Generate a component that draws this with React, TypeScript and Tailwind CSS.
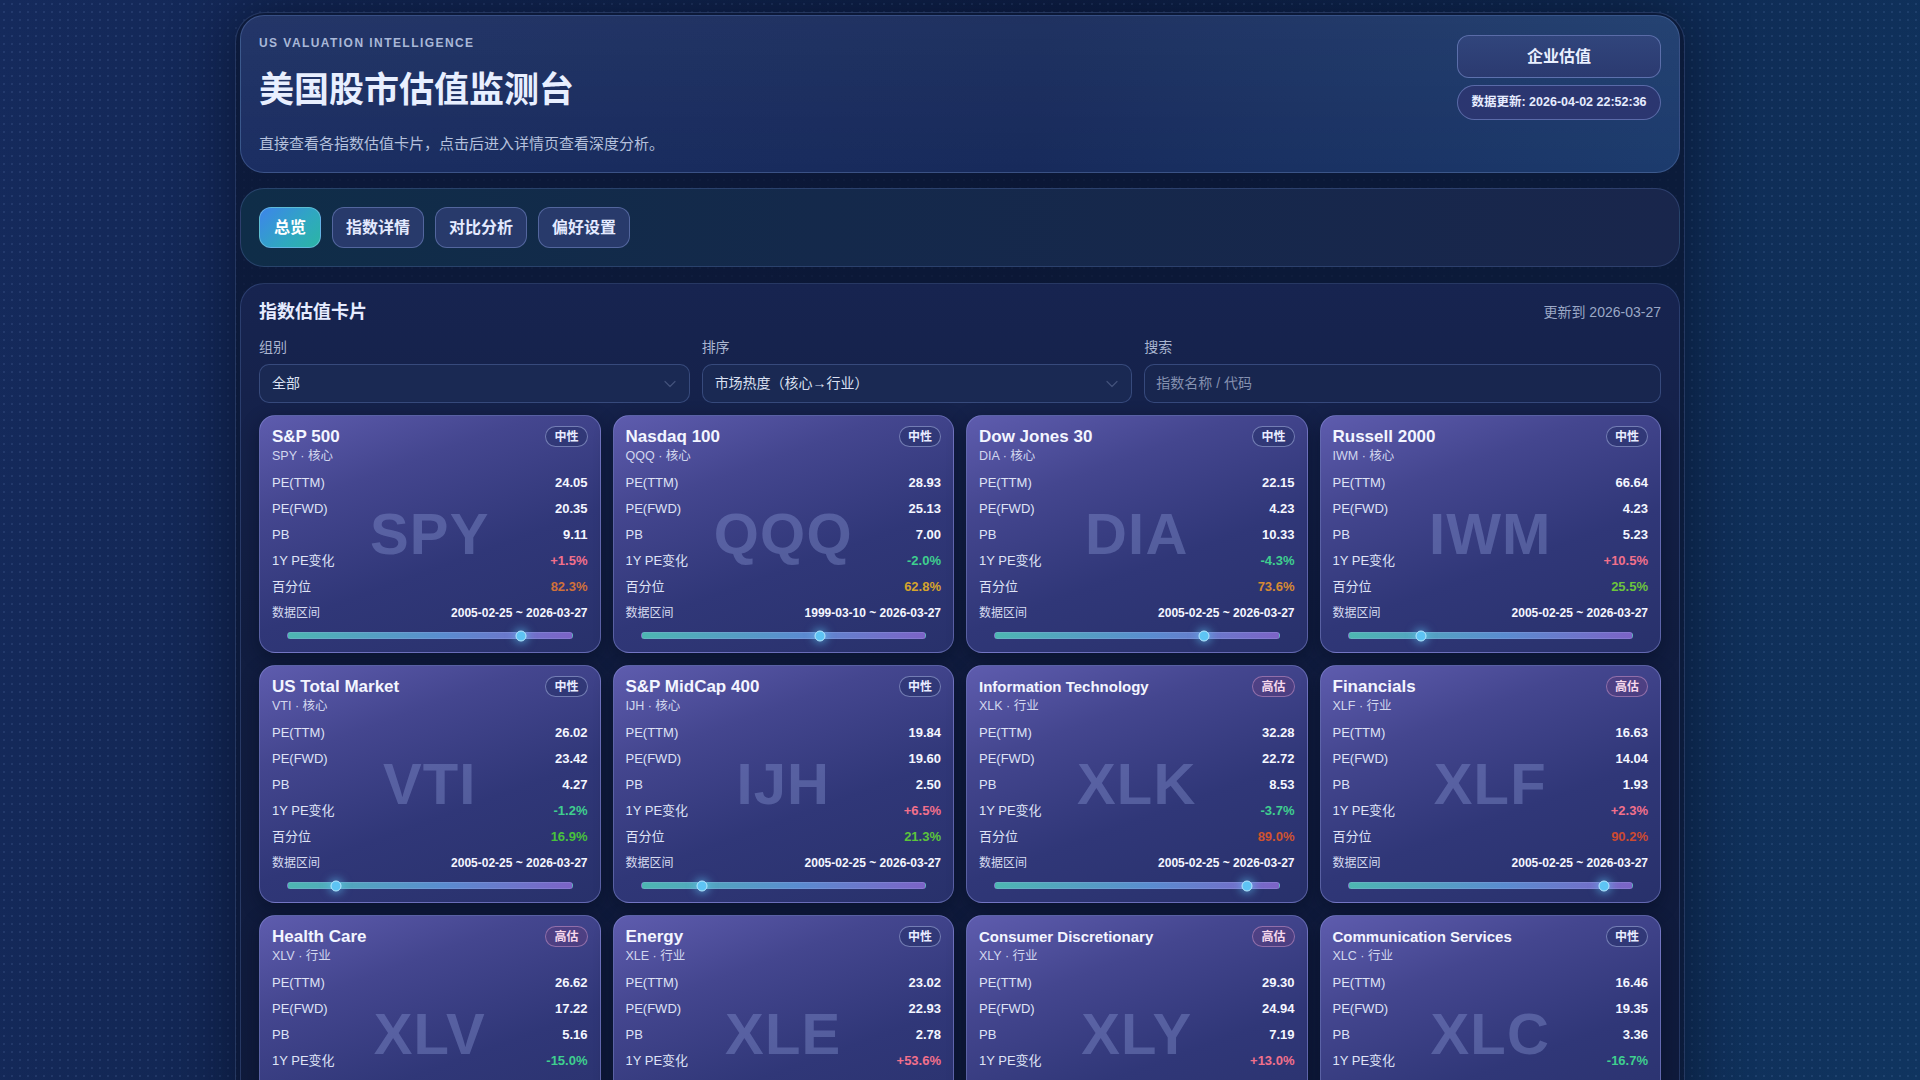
import React from "react";

type Item = {
  name: string;
  code: string;
  group: string;
  badge: "中性" | "高估";
  ttm: string;
  fwd: string;
  pb: string;
  chg: string;
  pct: number;
  pctColor: string;
  range: string;
};

const R1 = "2005-02-25 ~ 2026-03-27";

const items: Item[] = [
  { name: "S&P 500", code: "SPY", group: "核心", badge: "中性", ttm: "24.05", fwd: "20.35", pb: "9.11", chg: "+1.5%", pct: 82.3, pctColor: "#d0713a", range: R1 },
  { name: "Nasdaq 100", code: "QQQ", group: "核心", badge: "中性", ttm: "28.93", fwd: "25.13", pb: "7.00", chg: "-2.0%", pct: 62.8, pctColor: "#d5a42c", range: "1999-03-10 ~ 2026-03-27" },
  { name: "Dow Jones 30", code: "DIA", group: "核心", badge: "中性", ttm: "22.15", fwd: "4.23", pb: "10.33", chg: "-4.3%", pct: 73.6, pctColor: "#d68a33", range: R1 },
  { name: "Russell 2000", code: "IWM", group: "核心", badge: "中性", ttm: "66.64", fwd: "4.23", pb: "5.23", chg: "+10.5%", pct: 25.5, pctColor: "#6cc43c", range: R1 },
  { name: "US Total Market", code: "VTI", group: "核心", badge: "中性", ttm: "26.02", fwd: "23.42", pb: "4.27", chg: "-1.2%", pct: 16.9, pctColor: "#48c23c", range: R1 },
  { name: "S&P MidCap 400", code: "IJH", group: "核心", badge: "中性", ttm: "19.84", fwd: "19.60", pb: "2.50", chg: "+6.5%", pct: 21.3, pctColor: "#5cc43b", range: R1 },
  { name: "Information Technology", code: "XLK", group: "行业", badge: "高估", ttm: "32.28", fwd: "22.72", pb: "8.53", chg: "-3.7%", pct: 89.0, pctColor: "#cf5330", range: R1 },
  { name: "Financials", code: "XLF", group: "行业", badge: "高估", ttm: "16.63", fwd: "14.04", pb: "1.93", chg: "+2.3%", pct: 90.2, pctColor: "#cd4a30", range: R1 },
  { name: "Health Care", code: "XLV", group: "行业", badge: "高估", ttm: "26.62", fwd: "17.22", pb: "5.16", chg: "-15.0%", pct: 86.4, pctColor: "#cf5d31", range: R1 },
  { name: "Energy", code: "XLE", group: "行业", badge: "中性", ttm: "23.02", fwd: "22.93", pb: "2.78", chg: "+53.6%", pct: 58.7, pctColor: "#d4a82c", range: R1 },
  { name: "Consumer Discretionary", code: "XLY", group: "行业", badge: "高估", ttm: "29.30", fwd: "24.94", pb: "7.19", chg: "+13.0%", pct: 87.5, pctColor: "#cf5830", range: R1 },
  { name: "Communication Services", code: "XLC", group: "行业", badge: "中性", ttm: "16.46", fwd: "19.35", pb: "3.36", chg: "-16.7%", pct: 47.2, pctColor: "#b8b833", range: R1 },
];

function Badge({ kind }: { kind: "中性" | "高估" }) {
  if (kind === "高估") {
    return (
      <span className="flex h-[21px] shrink-0 items-center rounded-full border border-[#c995c8]/55 bg-[#6a3c78]/35 px-[8px] text-[12px] font-bold text-[#f6d7ec]">
        高估
      </span>
    );
  }
  return (
    <span className="flex h-[21px] shrink-0 items-center rounded-full border border-[#aab6e4]/55 bg-[#1e2a60]/40 px-[8px] text-[12px] font-bold text-[#e8ecff]">
      中性
    </span>
  );
}

function Card({ it }: { it: Item }) {
  const long = it.name.length > 18;
  const pos = it.chg.startsWith("+");
  const rows: { label: string; value: string; color?: string }[] = [
    { label: "PE(TTM)", value: it.ttm },
    { label: "PE(FWD)", value: it.fwd },
    { label: "PB", value: it.pb },
    { label: "1Y PE变化", value: it.chg, color: pos ? "#f2708b" : "#3fcf8f" },
    { label: "百分位", value: `${it.pct.toFixed(1)}%`, color: it.pctColor },
  ];
  return (
    <div className="relative h-[238px] overflow-hidden rounded-[16px] border border-[#9298e2]/45 bg-[linear-gradient(160deg,#5e5cae_0%,#44468f_28%,#303778_60%,#28316b_100%)] pl-[12px] pr-[12px] pt-[10px] shadow-[0_6px_18px_rgba(5,10,30,0.45)]">
      <div className="pointer-events-none absolute inset-0 flex select-none items-center justify-center text-[58px] font-bold leading-none tracking-[0.02em] text-[#8797d2]/40">
        {it.code}
      </div>
      <div className="relative">
        <div className="flex h-[21px] items-center justify-between">
          <div
            className={
              long
                ? "text-[15px] font-bold leading-[20px] text-[#f3f5ff]"
                : "text-[17px] font-bold leading-[20px] text-[#f3f5ff]"
            }
          >
            {it.name}
          </div>
          <Badge kind={it.badge} />
        </div>
        <div className="text-[12.5px] leading-[18px] text-[#d2d7ee]">
          {it.code} · {it.group}
        </div>
        <div className="mt-[5px]">
          {rows.map((r) => (
            <div key={r.label} className="flex h-[26px] items-center justify-between text-[13px]">
              <span className="text-[#dfe3f6]">{r.label}</span>
              <span className="font-bold text-[#f4f6ff]" style={r.color ? { color: r.color } : undefined}>
                {r.value}
              </span>
            </div>
          ))}
          <div className="flex h-[26px] items-center justify-between text-[12px]">
            <span className="text-[#d6dbf0]">数据区间</span>
            <span className="font-bold text-[#f4f6ff]">{it.range}</span>
          </div>
        </div>
        <div className="relative mx-[15px] mt-[6px] h-[7px] rounded-full border border-[#a9b4ec]/25 bg-[linear-gradient(90deg,#4db7b2_0%,#5a8cd0_55%,#7c63c6_100%)]">
          <div
            className="absolute top-1/2 h-[11px] w-[11px] -translate-x-1/2 -translate-y-1/2 rounded-full border border-[#b6e8ff] bg-[#5ec4f4] shadow-[0_0_8px_2px_rgba(94,196,244,0.55)]"
            style={{ left: `${it.pct}%` }}
          />
        </div>
      </div>
    </div>
  );
}

function Chevron() {
  return (
    <svg width="12" height="8" viewBox="0 0 12 8" fill="none" className="opacity-35">
      <path d="M1 1.5 L6 6.5 L11 1.5" stroke="#8d9cc4" strokeWidth="1.2" strokeLinecap="round" strokeLinejoin="round" />
    </svg>
  );
}

export default function App() {
  return (
    <div className="relative min-h-screen w-full overflow-hidden bg-[linear-gradient(100deg,#152a5c_0%,#11254f_30%,#0e1f45_50%,#0f2c55_80%,#103560_100%)] font-['Liberation_Sans','Noto_Sans_CJK_SC',sans-serif]">
      <div className="pointer-events-none absolute inset-0 bg-[radial-gradient(rgba(160,190,255,0.10)_1px,transparent_1.3px)] bg-[length:8px_8px]" />
      <div className="relative mx-auto mt-[12px] w-[1450px] rounded-t-[30px] border border-b-0 border-[#4a6398]/40 bg-[#0b1631]/75 px-[4px] pt-[2px] pb-[40px] shadow-[0_0_60px_rgba(3,8,25,0.55)]">
        {/* Header */}
        <div className="flex h-[158px] justify-between rounded-[24px] border border-[#5c77b0]/45 bg-[linear-gradient(180deg,rgba(255,255,255,0.04),rgba(255,255,255,0)),linear-gradient(95deg,#1b2e62_0%,#172a5b_55%,#1c3b6d_100%)] px-[18px] pt-[19px]">
          <div>
            <div className="text-[12px] font-bold leading-[16px] tracking-[0.12em] text-[#a9b8d8]">
              US VALUATION INTELLIGENCE
            </div>
            <div className="mt-[16px] text-[35px] font-bold leading-[46px] text-[#e8efff]">美国股市估值监测台</div>
            <div className="mt-[20px] text-[15px] leading-[22px] text-[#b5c1dd]">
              直接查看各指数估值卡片，点击后进入详情页查看深度分析。
            </div>
          </div>
          <div className="flex w-[204px] flex-col gap-[7px]">
            <div className="flex h-[43px] items-center justify-center rounded-[12px] border border-[#8a9ee0]/50 bg-[linear-gradient(180deg,#31457c,#2b3a70)] text-[16px] font-bold text-[#eaf0ff]">
              企业估值
            </div>
            <div className="flex h-[35px] items-center justify-center rounded-full border border-[#8a9ee0]/50 bg-[#2b3670] text-[12.5px] font-bold text-[#e6ecff]">
              数据更新: 2026-04-02 22:52:36
            </div>
          </div>
        </div>

        {/* Nav */}
        <div className="mt-[15px] flex h-[79px] items-center gap-[11px] rounded-[24px] border border-[#4d67a0]/40 bg-[linear-gradient(90deg,#0f2d48_0%,#14294b_40%,#19264c_100%)] px-[18px]">
          <div className="flex h-[41px] items-center rounded-[12px] border border-[#7fc8ea]/60 bg-[linear-gradient(135deg,#3d85ea_0%,#2fa8c0_60%,#2bb5a4_100%)] px-[14px] text-[16px] font-bold text-white">
            总览
          </div>
          {["指数详情", "对比分析", "偏好设置"].map((t) => (
            <div
              key={t}
              className="flex h-[41px] items-center rounded-[12px] border border-[#7d92d2]/50 bg-[#283a6b] px-[13px] text-[16px] font-bold text-[#e4eaff]"
            >
              {t}
            </div>
          ))}
        </div>

        {/* Cards panel */}
        <div className="mt-[16px] rounded-t-[24px] border border-b-0 border-[#4d67a0]/40 bg-[linear-gradient(180deg,#172450_0%,#111d40_40%,#0f1a3b_100%)] px-[18px] pt-[15px] pb-[20px]">
          <div className="flex h-[26px] items-center justify-between">
            <div className="text-[18px] font-bold text-[#e6ecff]">指数估值卡片</div>
            <div className="text-[14px] text-[#9ba8c6]">更新到 2026-03-27</div>
          </div>
          <div className="mt-[12px] grid grid-cols-[1fr_1fr_1.2fr] gap-x-3">
            <div>
              <div className="text-[14px] leading-[20px] text-[#aab5d0]">组别</div>
              <div className="mt-[7px] flex h-[39px] items-center justify-between rounded-[10px] border border-[#3f5387]/80 bg-[#1a2953] pl-[12px] pr-[13px] text-[14px] text-[#dbe1f2]">
                <span>全部</span>
                <Chevron />
              </div>
            </div>
            <div>
              <div className="text-[14px] leading-[20px] text-[#aab5d0]">排序</div>
              <div className="mt-[7px] flex h-[39px] items-center justify-between rounded-[10px] border border-[#3f5387]/80 bg-[#1a2953] pl-[12px] pr-[13px] text-[14px] text-[#dbe1f2]">
                <span>市场热度（核心→行业）</span>
                <Chevron />
              </div>
            </div>
            <div>
              <div className="text-[14px] leading-[20px] text-[#aab5d0]">搜索</div>
              <div className="mt-[7px] flex h-[39px] items-center rounded-[10px] border border-[#3f5387]/80 bg-[#18264f] px-[11px] text-[14px] text-[#8591b0]">
                指数名称 / 代码
              </div>
            </div>
          </div>
          <div className="mt-[12px] grid grid-cols-4 gap-3">
            {items.map((it) => (
              <Card key={it.code} it={it} />
            ))}
          </div>
        </div>
      </div>
    </div>
  );
}
